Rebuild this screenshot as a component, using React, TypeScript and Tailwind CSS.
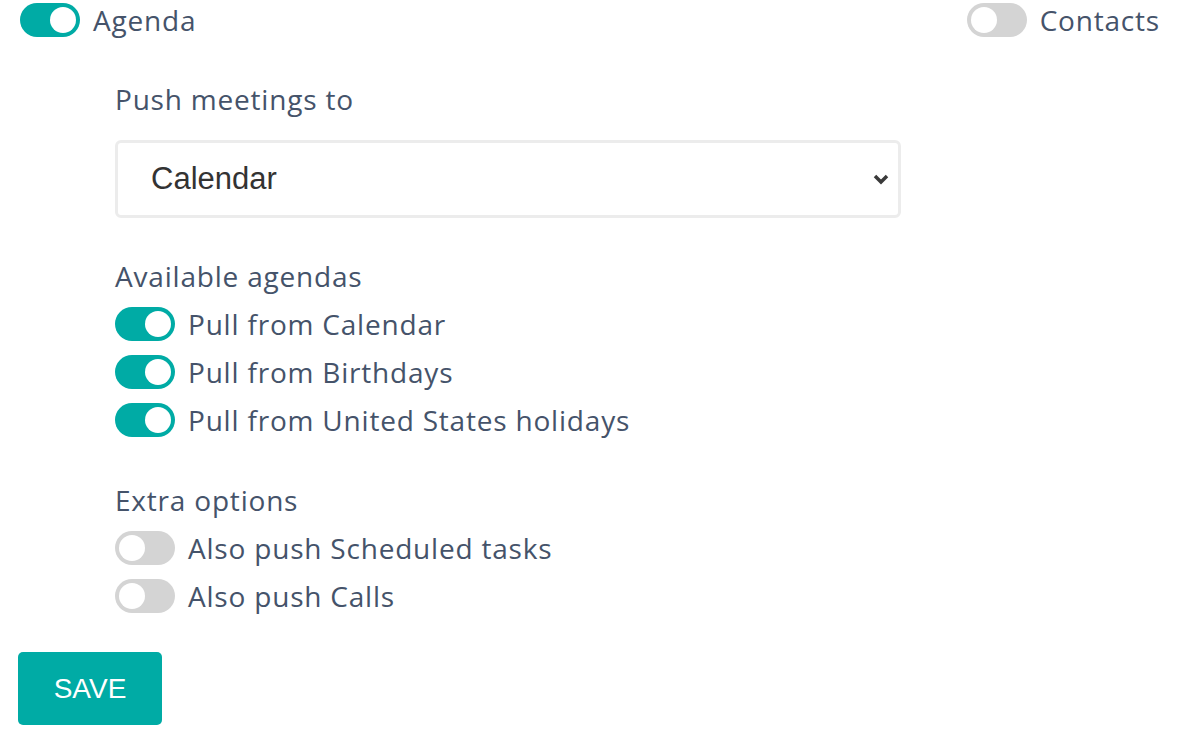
import { useState } from "react";

function Toggle({ on, onClick }: { on: boolean; onClick: () => void }) {
  return (
    <button
      type="button"
      onClick={onClick}
      className={
        "flex h-[34px] w-[60px] shrink-0 items-center rounded-full px-[4px] transition-colors " +
        (on ? "justify-end bg-[#00aba5]" : "justify-start bg-[#d4d4d4]")
      }
    >
      <span className="h-[26px] w-[26px] rounded-full bg-white" />
    </button>
  );
}

function ToggleRow({ label, on, onClick }: { label: string; on: boolean; onClick: () => void }) {
  return (
    <div className="flex h-[48px] items-center gap-[13px]">
      <Toggle on={on} onClick={onClick} />
      <span>{label}</span>
    </div>
  );
}

export default function App() {
  const [flags, setFlags] = useState<Record<string, boolean>>({
    agenda: true,
    contacts: false,
    calendar: true,
    birthdays: true,
    holidays: true,
    tasks: false,
    calls: false,
  });
  const flip = (k: string) => setFlags((f) => ({ ...f, [k]: !f[k] }));

  return (
    <div className="min-h-screen bg-white text-[28px] leading-[34px] tracking-[0.8px] text-[#45536a] [font-family:'Open_Sans','Noto_Sans',sans-serif]">
      <div className="flex items-center justify-between pl-[20px] pr-[40px] pt-[3px]">
        <div className="flex items-center gap-[13px]">
          <Toggle on={flags.agenda} onClick={() => flip("agenda")} />
          <span>Agenda</span>
        </div>
        <div className="flex items-center gap-[13px]">
          <Toggle on={flags.contacts} onClick={() => flip("contacts")} />
          <span>Contacts</span>
        </div>
      </div>

      <div className="pl-[115px]">
        <div className="mt-[45px]">Push meetings to</div>
        <div className="mt-[24px] flex h-[78px] w-[786px] items-center justify-between rounded-[6px] border-[3px] border-[#ececec] bg-white pl-[33px] pr-[7px] tracking-normal text-[#333] [font-family:'Liberation_Sans',Arial,sans-serif]">
          <span className="text-[31px]">Calendar</span>
          <svg width="20" height="14" viewBox="0 0 20 14" fill="none">
            <path d="M4 4l6 6 6-6" stroke="#3a3a3a" strokeWidth="3.5" />
          </svg>
        </div>

        <div className="mt-[41px]">Available agendas</div>
        <div className="mt-[7px]">
          <ToggleRow label="Pull from Calendar" on={flags.calendar} onClick={() => flip("calendar")} />
          <ToggleRow label="Pull from Birthdays" on={flags.birthdays} onClick={() => flip("birthdays")} />
          <ToggleRow label="Pull from United States holidays" on={flags.holidays} onClick={() => flip("holidays")} />
        </div>

        <div className="mt-[39px]">Extra options</div>
        <div className="mt-[7px]">
          <ToggleRow label="Also push Scheduled tasks" on={flags.tasks} onClick={() => flip("tasks")} />
          <ToggleRow label="Also push Calls" on={flags.calls} onClick={() => flip("calls")} />
        </div>
      </div>

      <div className="mt-[32px] pl-[18px]">
        <button
          type="button"
          className="h-[73px] w-[144px] rounded-[5px] bg-[#00aba5] text-[28px] tracking-normal text-white [font-family:'Liberation_Sans',Arial,sans-serif]"
        >
          SAVE
        </button>
      </div>
    </div>
  );
}
